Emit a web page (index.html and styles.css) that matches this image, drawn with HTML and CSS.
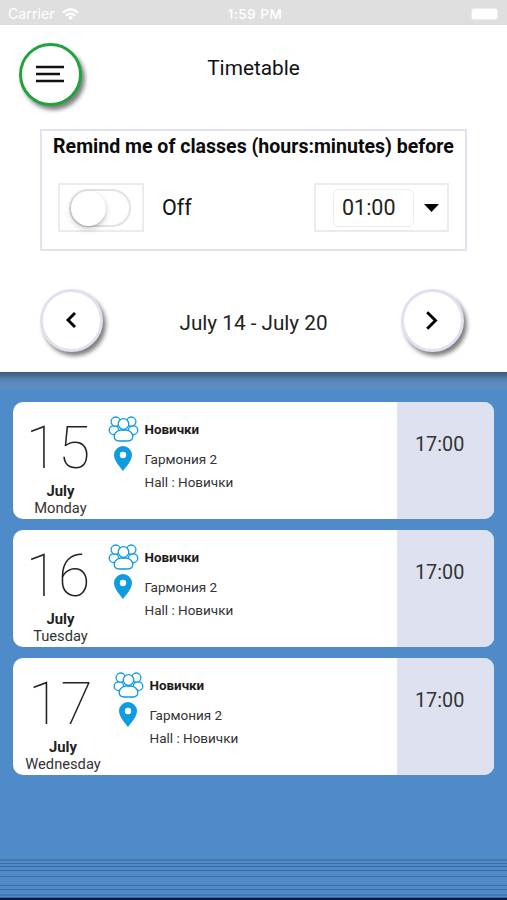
FILE: index.html
```html
<!DOCTYPE html>
<html lang="en">
<head>
<meta charset="utf-8">
<title>Timetable</title>
<link rel="stylesheet" href="styles.css">
</head>
<body>
<svg width="0" height="0" class="defs" aria-hidden="true">
  <symbol id="group" viewBox="0 0 30 26">
    <g fill="#fff" stroke="#0e9be0" stroke-width="1.3">
      <ellipse cx="5.400" cy="14.200" rx="4.700" ry="4.400"/>
      <ellipse cx="24.600" cy="14.200" rx="4.700" ry="4.400"/>
      <circle cx="7.200" cy="5.600" r="4.600"/>
      <circle cx="22.800" cy="5.600" r="4.600"/>
      <circle cx="15" cy="8" r="5.300"/>
      <path d="M15 14.300C20 13 24.400 16.500 24.300 20.600C24.200 23.600 22 25 19.500 25H10.500C8 25 5.800 23.600 5.700 20.600C5.600 16.500 10 13 15 14.300Z"/>
    </g>
  </symbol>
  <symbol id="pin" viewBox="0 0 18 25">
    <path fill="#0e9be0" fill-rule="evenodd" d="M9 0A9 9 0 0 0 0 9C0 15 6.500 21.500 9 25C11.500 21.500 18 15 18 9A9 9 0 0 0 9 0ZM9 5.800a3.200 3.200 0 1 1 0 6.400a3.200 3.200 0 0 1 0-6.400Z"/>
  </symbol>
</svg>
<div class="status">
  <div class="carrier">Carrier
    <svg width="17" height="12" viewBox="0 0 17 12" fill="none" stroke="#fff" stroke-width="2.300"><path d="M1 4.600Q8.500-2 16 4.600M3.900 7.600Q8.500 3.700 13.100 7.600"/><path d="M8.500 12L5.900 9.400Q8.500 7.300 11.100 9.400Z" fill="#fff" stroke="none"/></svg>
  </div>
  <div class="clock">1:59 PM</div>
  <div class="power"><span class="battery"></span></div>
</div>
<header class="top">
  <div class="title-row">
    <button class="round menu"><svg width="28" height="18" viewBox="0 0 28 18" fill="none" stroke="#111" stroke-width="2.700"><path d="M0 2H28M0 9H24M0 16H28"/></svg></button>
    <h1>Timetable</h1>
  </div>
  <section class="reminder">
    <h2>Remind me of classes (hours:minutes) before</h2>
    <div class="controls">
      <div class="switch-box"><div class="switch"><span class="knob"></span></div></div>
      <span class="off">Off</span>
      <div class="select"><span class="time">01:00</span><svg width="15" height="8" viewBox="0 0 15 8"><path d="M0 0H15L7.500 8Z"/></svg></div>
    </div>
  </section>
  <div class="week">
    <button class="round"><svg width="10" height="16" viewBox="0 0 10 16" fill="none" stroke="#000" stroke-width="2.900"><path d="M9 1L2 8L9 15"/></svg></button>
    <span class="range">July 14 - July 20</span>
    <button class="round next"><svg width="12" height="19" viewBox="0 0 12 19" fill="none" stroke="#000" stroke-width="2.900"><path d="M1.200 1.200L9.500 9.500L1.200 17.800"/></svg></button>
  </div>
</header>
<main class="list">
  <article class="card">
    <div class="date"><span class="num">15</span><b>July</b><span class="day">Monday</span></div>
    <div class="icons"><svg width="31" height="26"><use href="#group"/></svg><svg width="18" height="25"><use href="#pin"/></svg></div>
    <div class="info"><b>Новички</b><span>Гармония 2</span><span>Hall : Новички</span></div>
    <div class="hour">17:00</div>
  </article>
  <article class="card">
    <div class="date"><span class="num">16</span><b>July</b><span class="day">Tuesday</span></div>
    <div class="icons"><svg width="31" height="26"><use href="#group"/></svg><svg width="18" height="25"><use href="#pin"/></svg></div>
    <div class="info"><b>Новички</b><span>Гармония 2</span><span>Hall : Новички</span></div>
    <div class="hour">17:00</div>
  </article>
  <article class="card wide">
    <div class="date"><span class="num">17</span><b>July</b><span class="day">Wednesday</span></div>
    <div class="icons"><svg width="31" height="26"><use href="#group"/></svg><svg width="18" height="25"><use href="#pin"/></svg></div>
    <div class="info"><b>Новички</b><span>Гармония 2</span><span>Hall : Новички</span></div>
    <div class="hour">17:00</div>
  </article>
</main>
<footer class="stripes"></footer>
</body>
</html>
```
FILE: styles.css
```css
* { box-sizing: border-box; }
body {
  margin: 0;
  width: 507px;
  height: 900px;
  overflow: hidden;
  display: flex;
  flex-direction: column;
  background: #4f8ac9;
  font-family: Roboto, sans-serif;
  color: #222;
}
svg { display: block; flex: none; }
.defs { position: absolute; }
h1, h2 { margin: 0; }
.status {
  height: 25px;
  flex: none;
  display: grid;
  grid-template-columns: 1fr auto 1fr;
  align-items: center;
  padding: 2px 7px 0 8px;
  background: #dfdfdf;
  color: #fff;
  font: 14px/20px Inter, sans-serif;
}
.carrier { display: flex; align-items: center; gap: 7px; letter-spacing: .1px; }
.clock { font-size: 13.500px; font-weight: 500; letter-spacing: .5px; padding-left: 2px; }
.power { display: flex; justify-content: flex-end; }
.battery { width: 27px; height: 12px; border-radius: 3px; background: #fff; border: 1px solid #ececec; margin-right: 2px; }
.top {
  height: 347px;
  flex: none;
  background: #fff;
}
.title-row {
  height: 104px;
  display: grid;
  grid-template-columns: 63px 1fr 63px;
  padding: 18px 19px 0;
}
h1 { font-size: 20.800px; line-height: 26px; font-weight: 400; color: #111; text-align: center; padding-top: 12px; }
.round {
  width: 63px;
  height: 63px;
  padding: 0 1px 1px 0;
  border-radius: 50%;
  border: 3px solid #dfe0f1;
  background: #fff;
  display: flex;
  align-items: center;
  justify-content: center;
  box-shadow: 3px 4px 4px rgba(0, 0, 0, .5);
}
.menu { border-color: #20a33d; padding: 0 1px 2px 0; }
.reminder {
  width: 427px;
  height: 122px;
  margin-left: 40px;
  border: 2px solid #e1e2f2;
}
h2 { font-size: 19.550px; line-height: 24px; font-weight: 700; color: #0b0b0b; text-align: center; white-space: nowrap; padding-top: 4px; }
.controls { display: flex; align-items: center; margin-top: 24px; padding: 0 16px; }
.switch-box { width: 86px; height: 49px; border: 2px solid #eaebf2; padding: 4px 9px; }
.switch { width: 62px; height: 38px; border-radius: 20px; border: 2px solid #e3e3e3; }
.knob { display: block; width: 35px; height: 35px; border-radius: 50%; background: #fff; box-shadow: 0 3px 6px rgba(0, 0, 0, .2), 0 1px 2px rgba(0, 0, 0, .15); }
.off { font-size: 21.500px; line-height: 28px; color: #111; margin-left: 18px; }
.select { width: 135px; height: 49px; border: 2px solid #eaebf2; display: flex; align-items: center; gap: 10px; padding-left: 17px; margin-left: auto; }
.time { width: 81px; height: 38px; border: 1px solid #ededed; border-radius: 6px; padding-left: 8px; font-size: 21.500px; line-height: 35px; }
.week { display: flex; align-items: center; justify-content: space-between; padding: 38px 43px 0 40px; }
.range { font-size: 20.700px; line-height: 26px; padding: 4px 0 0 3px; }
.list {
  display: flex;
  flex-direction: column;
  gap: 11.500px;
  padding: 30px 13px 0;
  background: linear-gradient(to bottom, #3c5b7e 0, #44698f 3px, #527fac 7px, #5c8cc0 11px, #5a8dc4 17px, #4f8ac9 18px);
}
.card { height: 116.700px; display: flex; background: #fff; border-radius: 10px; overflow: hidden; }
.date { width: 95px; flex: none; display: flex; flex-direction: column; align-items: center; white-space: nowrap; }
.wide .date { width: 100px; }
.num { font-size: 59px; line-height: 64px; font-weight: 100; padding: 14px 5px 0 0; color: #222; }
.date b { font-size: 14.800px; line-height: 18px; padding-top: 2px; }
.day { font-size: 14.700px; line-height: 17px; color: #333; }
.icons { width: 30px; display: flex; flex-direction: column; align-items: center; gap: 4px; padding-top: 14px; }
.info { display: flex; flex-direction: column; flex: 1; padding: 17.500px 0 0 6.500px; font-size: 13.500px; color: #333; }
.info b { font-size: 13.400px; line-height: 20px; color: #1c1c1c; margin-bottom: 8.500px; }
.info span { line-height: 23px; }
.hour { width: 97px; background: #dde1f0; color: #333; padding: 30px 0 0 18px; font-size: 19.800px; line-height: 26px; }
.stripes {
  height: 42px;
  flex: none;
  margin-top: auto;
  background: linear-gradient(to bottom,
    transparent 0 1px, #4577b0 1px 3px, transparent 3px 5px,
    #3c6ba3 5px 6px, transparent 6px 8px, #3c6ba3 8px 9px,
    transparent 9px 12px, #3f6ea5 12px 13px, transparent 13px 18px,
    #3f6ea5 18px 19px, transparent 19px 27px, #3c6ba3 27px 28px,
    transparent 28px 31px, #3c6ba3 31px 32px, transparent 32px 36px,
    #4577b0 36px 38px, transparent 38px 39px, #3567a0 39px 40px, #061a33 40px 42px);
}
```
